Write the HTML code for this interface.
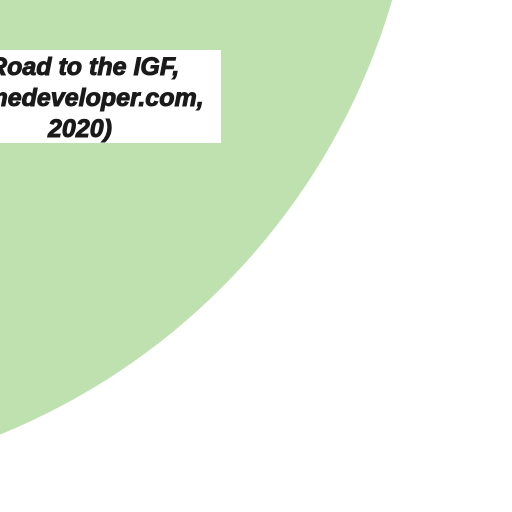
<!DOCTYPE html>
<html><head><style>
html,body{margin:0;padding:0;width:512px;height:512px;overflow:hidden;background:#fff}
.w{position:absolute;left:0;top:0;width:512px;height:512px;overflow:hidden}
.c{position:absolute;left:-925px;top:-860px;width:1344px;height:1344px;border-radius:50%;background:#bfe1b0}
.b{position:absolute;left:0;top:50px;width:221px;height:93px;background:#fff}
.t{position:absolute;left:-90px;top:52px;width:340px;text-align:center;font-family:"Liberation Sans",sans-serif;font-weight:bold;font-style:italic;font-size:25px;line-height:31px;color:#1a1a1a;letter-spacing:0px;-webkit-text-stroke:1px #1a1a1a}
</style></head><body><div class="w">
<div class="c"></div>
<div class="b"></div>
<div class="t">(Road to the IGF,<br>gamedeveloper.com,<br>2020)</div>
</div></body></html>
